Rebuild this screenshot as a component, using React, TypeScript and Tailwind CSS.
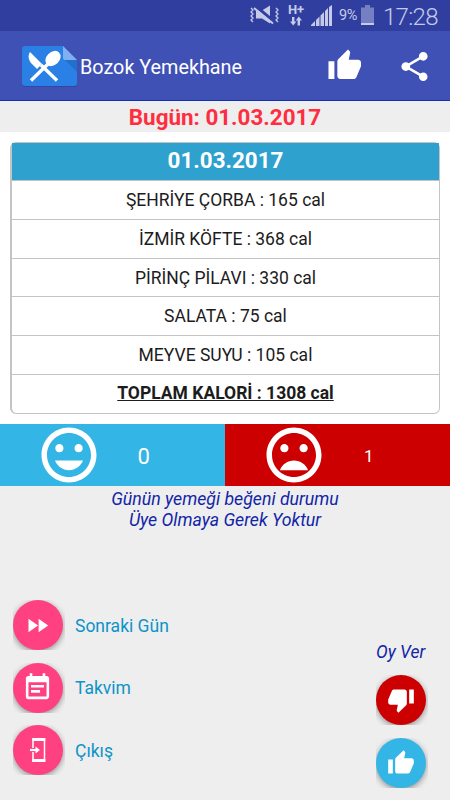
import type { ReactNode } from "react";
import {
  MdEventNote,
  MdFastForward,
  MdInsertEmoticon,
  MdMoodBad,
  MdShare,
  MdThumbDown,
  MdThumbUp,
} from "react-icons/md";

const MEALS = [
  "ŞEHRİYE ÇORBA : 165 cal",
  "İZMİR KÖFTE : 368 cal",
  "PİRİNÇ PİLAVI : 330 cal",
  "SALATA : 75 cal",
  "MEYVE SUYU : 105 cal",
];

function StatusBar() {
  return (
    <div className="flex h-[31px] shrink-0 items-center bg-[#303f9f] pl-[249px] text-[#c5cae9]">
      <svg width="31" height="31" viewBox="0 0 31 31" fill="none" stroke="currentColor">
        <path d="M2 8l2 2-2 2 2 2-2 2 2 2-2 2 2 2M27 8l2 2-2 2 2 2-2 2 2 2-2 2 2 2" strokeWidth="1.3" />
        <path d="M7 10.500h6l8-5v18l-8-5H7z" fill="currentColor" stroke="none" />
        <path d="M7 6.500l18 15" stroke="#303f9f" strokeWidth="3" />
        <path d="M5 8l19 15.5" strokeWidth="2" />
      </svg>
      <div className="ml-[8px] flex h-[31px] w-[16px] flex-col items-center pt-[3px]">
        <span className="h-[13px] text-[13px] leading-[13px] font-bold">H+</span>
        <svg width="12" height="10" viewBox="0 0 12 10" fill="currentColor">
          <path d="M2 1h2.4v4.5h2L3.2 9.5 0 5.500h2zM7.600 9.500H10V4.500h2L8.800.5 5.800 4.500h1.800z" />
        </svg>
      </div>
      <svg className="ml-[7px]" width="21" height="31" viewBox="0 0 21 31" fill="currentColor">
        <path d="M0 26v-1l4-4v5zM5 26v-6l3.500-3.500V26zM9.500 26V15.500L13 12v14zM14 26V11l3-3v18zM18 26V7l3-2v21z" />
      </svg>
      <span className="ml-[7px] w-[19px] text-[14.5px] leading-[35px] whitespace-nowrap tracking-[-0.5px]">9%</span>
      <svg className="ml-[3px]" width="13" height="31" viewBox="0 0 13 31">
        <path d="M4 5h5v2.500h4V25H0V7.500h4z" fill="#7580c2" />
        <path d="M0 23h13v2H0z" fill="#c5cae9" />
      </svg>
      <span className="ml-[9px] pt-[3px] text-[24px] leading-[34px] font-light tracking-[-0.7px]">17:28</span>
    </div>
  );
}

function AppBar() {
  return (
    <header className="flex h-[70px] shrink-0 items-center border-b border-[#0f32b4] bg-[#3f51b5] pl-[22px] text-white">
      <svg className="mt-[2px] shrink-0" width="56" height="43" viewBox="0 0 56 43">
        <path d="M3 3h38l14 14v22a3 3 0 0 1-3 3H3a3 3 0 0 1-3-3V6a3 3 0 0 1 3-3z" fill="#303f8f" opacity=".6" />
        <path d="M3 1h38l14 14v23a3 3 0 0 1-3 3H3a3 3 0 0 1-3-3V4a3 3 0 0 1 3-3z" fill="#2a80e4" />
        <path d="M43 15h12v12z" fill="#2370cc" />
        <path d="M41 1l14 14H43a2 2 0 0 1-2-2z" fill="#80b0ef" />
        <path d="M8 7L20 19l-5 5L9 18C6 14 6 10 8 7z" fill="#fff" />
        <ellipse cx="31" cy="13.500" rx="8.600" ry="6.500" transform="rotate(-45 31 13.500)" fill="#fff" />
        <path d="M27 18L9 35.500M19 20l16 15.500" stroke="#fff" strokeWidth="3.400" />
      </svg>
      <h1 className="ml-[2px] w-[246px] pt-[4px] text-[19.8px] leading-6 whitespace-nowrap">Bozok Yemekhane</h1>
      <MdThumbUp className="mt-px ml-[1px] size-[35.5px] shrink-0" />
      <MdShare className="mt-[2px] ml-[34.5px] size-[35px] shrink-0" />
    </header>
  );
}

function MenuCard() {
  return (
    <section className="h-[292px] shrink-0 bg-white px-[10px] pt-[10px]">
      <div className="h-[272px] rounded-[6px] border border-l-2 border-[#c4c4c4] text-center text-[17.5px] text-[#1c1c1c]">
        <div className="h-[37px] bg-[#2fa1cf] text-[22.4px] leading-[35px] font-bold text-white">01.03.2017</div>
        {MEALS.map((meal) => (
          <div key={meal} className="h-[38.8px] border-t border-[#c4c4c4] leading-[38px]">
            {meal}
          </div>
        ))}
        <div className="border-t border-[#c4c4c4] leading-[37px] font-bold underline">TOPLAM KALORİ : 1308 cal</div>
      </div>
    </section>
  );
}

function RoundButton({ color, children }: { color: string; children: ReactNode }) {
  return (
    <button className="h-[50px] w-[52px] shrink-0 overflow-hidden">
      <span
        className={`flex size-[50px] items-center justify-center rounded-full text-white shadow-[0_2px_6px_rgba(0,0,0,0.4)] ${color}`}
      >
        {children}
      </span>
    </button>
  );
}

function ExitIcon() {
  return (
    <svg width="18" height="26" viewBox="0 0 18 26" fill="none" stroke="#fff">
      <path d="M4 11V2h11.500v22H4v-9" strokeWidth="1.500" />
      <path d="M3.300 2.500h13M3.300 23.500h13" strokeWidth="3" />
      <path d="M1 13h6" strokeWidth="2.200" />
      <path d="M6.500 9.500L11 13l-4.500 3.500z" fill="#fff" stroke="none" />
    </svg>
  );
}

export default function App() {
  return (
    <div className="flex h-[800px] w-[450px] flex-col overflow-hidden bg-[#eeeeee] font-[Roboto,sans-serif]">
      <StatusBar />
      <AppBar />
      <div className="h-[31px] shrink-0 text-center text-[22.4px] leading-[33px] font-bold text-[#ff2d40]">
        Bugün: 01.03.2017
      </div>
      <MenuCard />
      <div className="flex h-[62px] shrink-0 text-white">
        <div className="flex w-[225px] items-center bg-[#33b5e5] pl-[35.500px]">
          <MdInsertEmoticon className="size-[66px] shrink-0" />
          <span className="ml-[36px] pt-[4px] text-[22px] leading-6">0</span>
        </div>
        <div className="flex w-[225px] items-center bg-[#cc0000] pl-[36px]">
          <MdMoodBad className="size-[66px] shrink-0" />
          <span className="ml-[37px] pt-[3px] text-[17px]">1</span>
        </div>
      </div>
      <p className="mt-[3px] text-center text-[17.7px] leading-[21px] text-[#1225a8] italic">
        Günün yemeği beğeni durumu
        <br />
        Üye Olmaya Gerek Yoktur
      </p>
      <div className="mt-[69px] flex justify-between pr-[22px] pl-[12.500px]">
        <div className="flex flex-col gap-[12.500px] text-[17.5px] text-[#0d93c9]">
          <div className="flex items-center gap-[10.500px]">
            <RoundButton color="bg-[#ff4081]">
              <MdFastForward className="size-[27px]" />
            </RoundButton>
            <span className="pt-[2px]">Sonraki Gün</span>
          </div>
          <div className="flex items-center gap-[10.500px]">
            <RoundButton color="bg-[#ff4081]">
              <MdEventNote className="size-[31px]" />
            </RoundButton>
            <span className="pt-[2px]">Takvim</span>
          </div>
          <div className="flex items-center gap-[10.500px]">
            <RoundButton color="bg-[#ff4081]">
              <ExitIcon />
            </RoundButton>
            <span className="pt-[2px]">Çıkış</span>
          </div>
        </div>
        <div className="flex flex-col items-start pt-[41px]">
          <span className="mb-[12px] text-[17.5px] leading-[22px] text-[#1225a8] italic">Oy Ver</span>
          <RoundButton color="bg-[#cc0000]">
            <MdThumbDown className="size-[28px]" />
          </RoundButton>
          <div className="mt-[12.500px] flex">
            <RoundButton color="bg-[#33b5e5]">
              <MdThumbUp className="size-[28px]" />
            </RoundButton>
          </div>
        </div>
      </div>
    </div>
  );
}
